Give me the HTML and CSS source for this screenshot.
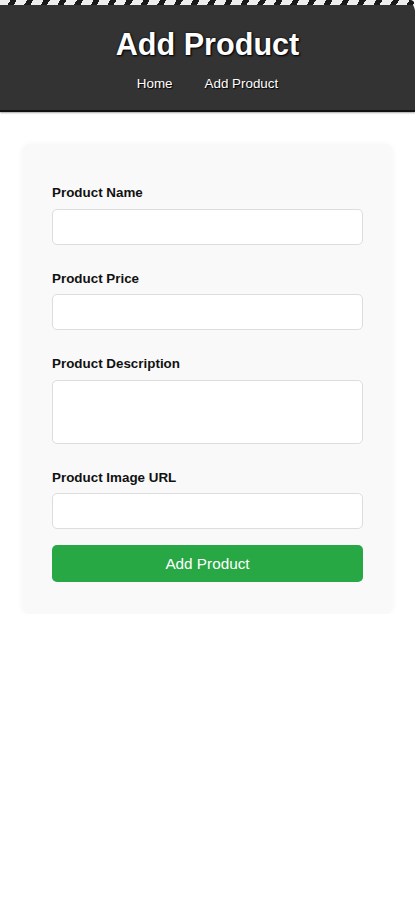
FILE: index.html
```html
<!DOCTYPE html>
<html lang="en">
<head>
<meta charset="utf-8">
<meta name="viewport" content="width=device-width, initial-scale=1">
<title>Add Product</title>
<link rel="stylesheet" href="styles.css">
</head>
<body>
<header class="site-header">
  <div class="stripe"></div>
  <h1 class="title">Add Product</h1>
  <nav class="nav">
    <a class="nav-link" href="#">Home</a>
    <a class="nav-link" href="#">Add Product</a>
  </nav>
</header>
<main class="main">
  <form class="card">
    <div class="field">
      <label class="label" for="name">Product Name</label>
      <input class="input" id="name" type="text">
    </div>
    <div class="field">
      <label class="label" for="price">Product Price</label>
      <input class="input" id="price" type="text">
    </div>
    <div class="field">
      <label class="label" for="desc">Product Description</label>
      <textarea class="input textarea" id="desc"></textarea>
    </div>
    <div class="field field-last">
      <label class="label" for="img">Product Image URL</label>
      <input class="input" id="img" type="text">
    </div>
    <button class="btn" type="button">Add Product</button>
  </form>
</main>
</body>
</html>
```
FILE: styles.css
```css
* { box-sizing: border-box; }
html, body { margin: 0; padding: 0; background: #fff; }
body { font-family: "Liberation Sans", Arial, sans-serif; color: #111; }

.site-header {
  position: relative;
  background: #333;
  border-bottom: 2px solid #111;
  box-shadow: 0 1px 2px rgba(0,0,0,0.35);
  border-top-right-radius: 12px;
  padding: 27px 0 19px;
  display: flex;
  flex-direction: column;
  align-items: center;
}
.stripe {
  position: absolute;
  left: 0; right: 0; top: 0;
  height: 5px;
  background: repeating-linear-gradient(120deg, #eee 0 9px, #1a1a1a 9px 14.4px);
  border-top-right-radius: 12px;
}
.title {
  margin: 0;
  font-size: 30.6px;
  line-height: 35px;
  font-weight: bold;
  color: #fff;
  text-shadow: 1px 1px 2px #000, 0 0 2px #000;
}
.nav {
  margin-top: 14px;
  display: flex;
  gap: 32px;
}
.nav-link {
  color: #fff;
  text-decoration: none;
  font-size: 13.4px;
  line-height: 15px;
  text-shadow: 1px 1px 1px #000;
}

.main { padding: 32px 22px 0; }
.card {
  background: #f9f9f9;
  border-radius: 8px;
  box-shadow: 0 0 6px rgba(0,0,0,0.04);
  padding: 41px 30px 32px;
  display: flex;
  flex-direction: column;
}
.field { display: flex; flex-direction: column; margin-bottom: 26px; }
.field-last { margin-bottom: 16px; }
.label {
  font-size: 13.4px;
  line-height: 15.5px;
  font-weight: bold;
  color: #111;
  margin-bottom: 8px;
}
.input {
  display: block;
  width: 100%;
  height: 36px;
  border: 1px solid #ddd;
  border-radius: 5px;
  background: #fff;
  font: inherit;
  padding: 6px 10px;
}
.textarea { height: 64px; resize: none; }
.btn {
  height: 37px;
  border: none;
  border-radius: 5px;
  background: #28a745;
  color: #fff;
  font-family: "Liberation Sans", Arial, sans-serif;
  font-size: 15.3px;
  cursor: pointer;
}
```
